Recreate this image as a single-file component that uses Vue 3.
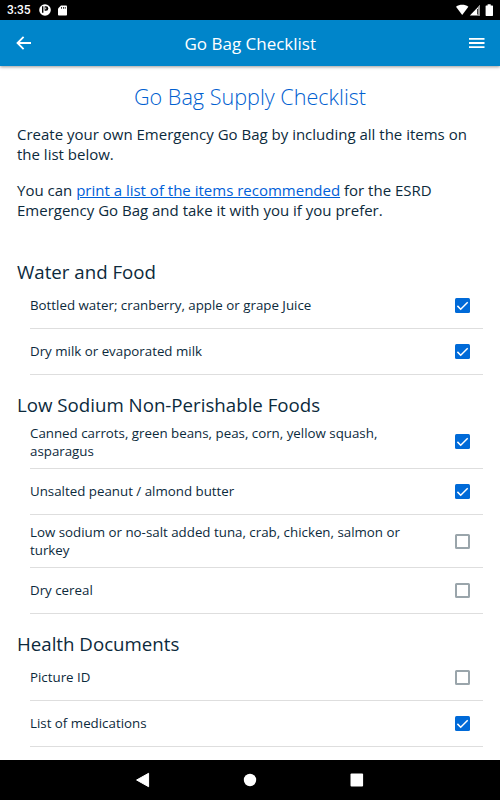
<template>
  <div class="screen">
    <div class="status-bar">
      <span class="time">3:35</span>
      <svg class="status-app" viewBox="0 0 12 12">
        <circle cx="6" cy="6" r="5.8" fill="#fff" />
        <path d="M3 2.3h1.4v6.4H3z" fill="#000" />
        <path d="M5.6 2.3h1.5a2.2 2.2 0 0 1 0 4.4H5.6z" fill="#000" />
        <path d="M6.3 3.6h.9v1.6h-.9z" fill="#fff" />
      </svg>
      <svg class="status-card" viewBox="0 0 9 11">
        <path d="M3 .4h5.2q.8 0 .8.8v8.6q0 .8-.8.8H.8q-.8 0-.8-.8V3.5z" fill="#fff" />
        <path d="M3.2 2h.8v1.7h-.8zM5 2h.8v1.7H5zM6.8 2h.8v1.7h-.8z" fill="#000" />
      </svg>
      <svg class="status-signal" viewBox="0 0 38 12">
        <path d="M0 2.7C3.6.1 8.8.1 12.4 2.7L6.2 11z" fill="#fff" />
        <path d="M13.8 11.5 24 1.1v10.4z" fill="#fff" />
        <path d="M21 5h1v5.4h-1z" fill="#000" opacity=".75" />
        <path d="M22 3.2 24 1.1v10.4h-2z" fill="#999" />
        <path d="M31.6.2h3.1v1.2h1.7q.6 0 .6.6v9.3q0 .6-.6.6h-6.2q-.6 0-.6-.6V2q0-.6.6-.6h1.4z" fill="#fff" />
      </svg>
    </div>

    <header class="toolbar">
      <button class="icon-button" aria-label="Back">
        <svg width="16" height="14" viewBox="0 0 16 14">
          <path d="M7.6.9 1.5 7l6.1 6.1M1.5 7H15" fill="none" stroke="#fff" stroke-width="1.8" />
        </svg>
      </button>
      <h1 class="toolbar-title">Go Bag Checklist</h1>
      <button class="icon-button" aria-label="Menu">
        <svg width="16" height="12" viewBox="0 0 16 12">
          <path d="M0 1.8h15.5M0 6h15.5M0 10.2h15.5" stroke="#fff" stroke-width="1.8" />
        </svg>
      </button>
    </header>

    <main class="content">
      <h2 class="page-title">Go Bag Supply Checklist</h2>
      <p class="intro">
        Create your own Emergency Go Bag by including all the items on<br />the list below.
      </p>
      <p class="intro">
        You can <a href="#">print a list of the items recommended</a> for the ESRD<br />Emergency Go Bag and take it with you if you prefer.
      </p>

      <section v-for="section in sections" :key="section.title" class="section">
        <h3 class="section-title">{{ section.title }}</h3>
        <div
          v-for="item in section.items"
          :key="item.label"
          class="item"
          :class="{ tall: item.tall }"
          @click="item.checked = !item.checked"
        >
          <span class="item-label">{{ item.label }}</span>
          <span class="checkbox" :class="{ checked: item.checked }">
            <svg v-if="item.checked" viewBox="0 0 15 15">
              <path d="M2.4 7.9 5.7 11.2 12.7 4.2" fill="none" stroke="#fff" stroke-width="1.5" />
            </svg>
          </span>
        </div>
      </section>
    </main>

    <nav class="nav-bar">
      <svg width="14" height="16" viewBox="0 0 14 16">
        <path d="M.6 8 12.6 1.3V14.7z" fill="#fff" stroke="#fff" stroke-linejoin="round" />
      </svg>
      <svg width="14" height="14" viewBox="0 0 14 14">
        <circle cx="7" cy="7" r="6.2" fill="#fff" />
      </svg>
      <svg width="14" height="14" viewBox="0 0 14 14">
        <rect x=".5" y=".5" width="12.6" height="13" rx="1" fill="#fff" />
      </svg>
    </nav>
  </div>
</template>

<script setup>
import { ref } from "vue";

const sections = ref([
  {
    title: "Water and Food",
    items: [
      { label: "Bottled water; cranberry, apple or grape Juice", checked: true },
      { label: "Dry milk or evaporated milk", checked: true },
    ],
  },
  {
    title: "Low Sodium Non-Perishable Foods",
    items: [
      {
        label: "Canned carrots, green beans, peas, corn, yellow squash, asparagus",
        checked: true,
        tall: true,
      },
      { label: "Unsalted peanut / almond butter", checked: true },
      {
        label: "Low sodium or no-salt added tuna, crab, chicken, salmon or turkey",
        checked: false,
        tall: true,
      },
      { label: "Dry cereal", checked: false },
    ],
  },
  {
    title: "Health Documents",
    items: [
      { label: "Picture ID", checked: false },
      { label: "List of medications", checked: true },
    ],
  },
]);
</script>

<style>
body {
  margin: 0;
}
</style>

<style scoped>
.screen {
  width: 500px;
  height: 800px;
  display: flex;
  flex-direction: column;
  overflow: hidden;
  background: #fff;
  color: #0c2a3c;
  font-family: "Open Sans", sans-serif;
}

.status-bar {
  flex: none;
  height: 20px;
  box-sizing: border-box;
  padding: 0 6px 0 7px;
  display: flex;
  align-items: center;
  background: #000;
  color: #fff;
}

.time {
  width: 32px;
  font: 500 12px Roboto, sans-serif;
}

.status-app {
  width: 12px;
  height: 12px;
}

.status-card {
  width: 9px;
  height: 11px;
  margin-left: 7px;
}

.status-signal {
  width: 38px;
  height: 12px;
  margin-left: auto;
}

.toolbar {
  flex: none;
  z-index: 1;
  height: 46px;
  box-sizing: border-box;
  padding: 0 15px 0 15.5px;
  display: flex;
  align-items: center;
  justify-content: space-between;
  background: #0085ca;
  color: #fff;
  box-shadow: 0 1px 3px rgba(0, 0, 0, 0.4);
}

.icon-button {
  display: flex;
  padding: 0;
  border: 0;
  background: none;
}

.toolbar-title {
  margin: 0;
  font-size: 17px;
  font-weight: 400;
}

.content {
  flex: 1;
  min-height: 0;
  overflow: hidden;
  padding: 17px 17px 0;
}

.page-title {
  margin: 0 0 14px;
  text-align: center;
  color: #0060d0;
  font-size: 21.6px;
  font-weight: 300;
  line-height: 27px;
}

.intro {
  margin: 0 0 15.4px;
  font-size: 15px;
  line-height: 20.2px;
  white-space: nowrap;
}

.intro a {
  color: #0060d8;
}

.section {
  margin-top: 18.5px;
}

.intro + .section {
  margin-top: 41.1px;
}

.section-title {
  margin: 0;
  font-size: 18.7px;
  font-weight: 400;
  line-height: 22px;
}

.item {
  height: 46px;
  box-sizing: border-box;
  margin-left: 13px;
  padding-right: 13px;
  border-bottom: 1px solid #dedede;
  display: flex;
  align-items: center;
  justify-content: space-between;
  cursor: pointer;
}

.item.tall {
  height: 53.3px;
}

.item-label {
  width: 385px;
  padding-bottom: 0.9px;
  font-size: 13.32px;
  line-height: 18px;
}

.checkbox {
  width: 15px;
  height: 15px;
  box-sizing: border-box;
  border: 2px solid #9aa5ab;
  border-radius: 1.5px;
}

.checkbox.checked {
  border: 0;
  background: #006ad8;
}

.checkbox svg {
  display: block;
}

.nav-bar {
  flex: none;
  height: 40px;
  display: flex;
  align-items: center;
  justify-content: center;
  gap: 93px;
  background: #000;
}
</style>
